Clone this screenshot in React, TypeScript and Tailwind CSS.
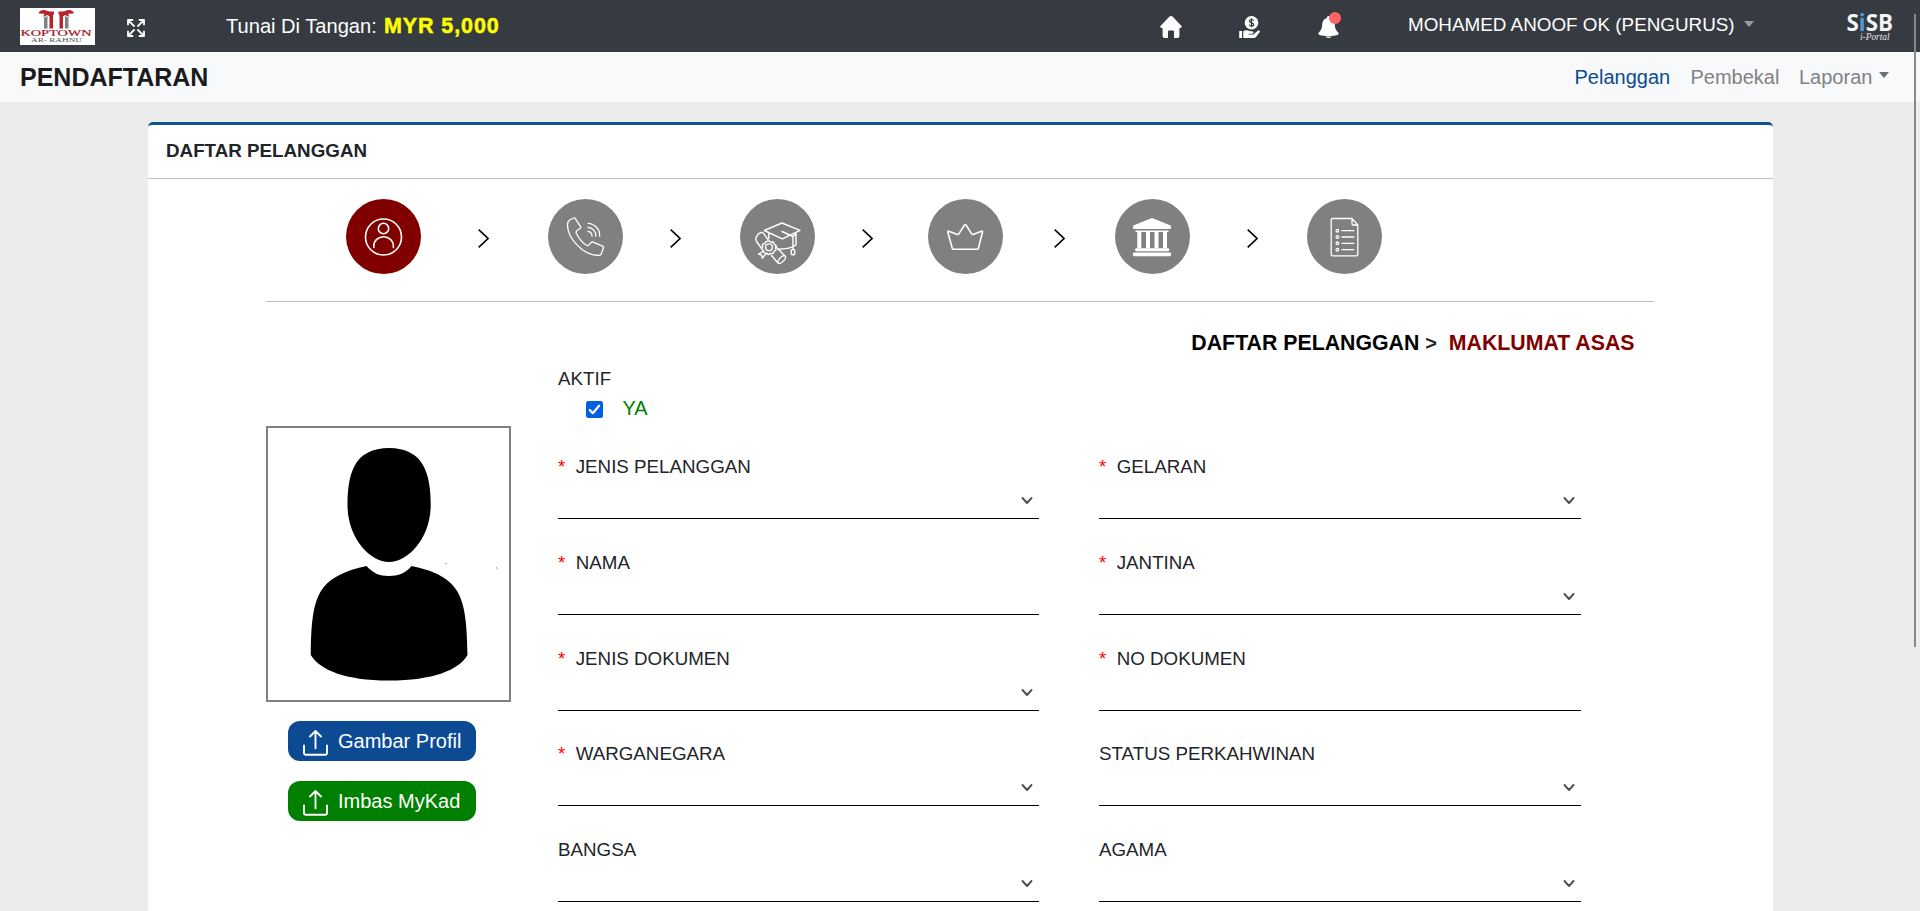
import React from "react";

function KoptownLogo() {
  return (
    <svg width="75" height="37" viewBox="0 0 75 37" className="block bg-white">
      <g fill="#808285">
        <path d="M24 9.500l3.500-1.500v12.500H24zM45 8l3.500 1.500V20.500H45z" />
      </g>
      <g fill="#b5232b">
        <path d="M18.500 5.500C19 3.500 21 2 23.500 2c2.500 0 4 1.500 6.500 1.500h4V6c-1 .8-1 1.500-1 3v11.500h-3.500V8.500L27.500 7 23 9l1.500-3.200z" />
        <path d="M54 5.500C53.500 3.500 51.500 2 49 2c-2.500 0-4 1.500-6.500 1.500h-4V6c1 .8 1 1.500 1 3v11.500H43V8.500L45 7l4.500 2L48 5.800z" />
      </g>
      <text x="0.500" y="28" textLength="71" lengthAdjust="spacingAndGlyphs" fontSize="8.500" fill="#a3161f" stroke="#a3161f" strokeWidth=".2" fontFamily="Liberation Serif, serif">KOPTOWN</text>
      <text x="11" y="33.500" textLength="51" lengthAdjust="spacingAndGlyphs" fontSize="5.500" fill="#555" fontFamily="Liberation Serif, serif">AR- RAHNU</text>
    </svg>
  );
}

function ExpandIcon() {
  return (
    <svg width="18" height="18" viewBox="0 0 18 18" fill="none" stroke="#fff" strokeWidth="1.800" strokeLinecap="round" strokeLinejoin="round" className="block">
      <path d="M1 5.500V1h4.500M1.300 1.300l5.700 5.700M12.500 1H17v4.500M16.700 1.300L11 7M1 12.500V17h4.500M1.300 16.700L7 11M12.500 17H17v-4.500M16.700 16.700L11 11" />
    </svg>
  );
}

function HomeIcon() {
  return (
    <svg width="22" height="22" viewBox="0 0 22 22" fill="#fff" className="block">
      <path d="M11 0c.6 0 1.100.2 1.500.6l8.800 9.200c.8.9.3 2.200-.9 2.200h-1v8c0 1.200-.8 2-2 2H14v-6.500c0-.5-.4-.9-.9-.9H8.900c-.5 0-.9.4-.9.900V22H4.600c-1.200 0-2-.8-2-2v-8h-1c-1.200 0-1.700-1.300-.9-2.200L9.500.6c.4-.4.9-.6 1.500-.6z" />
    </svg>
  );
}

function CashHandIcon() {
  return (
    <svg width="22" height="22" viewBox="0 0 22 22" fill="#fff" className="block">
      <circle cx="12.500" cy="6.800" r="6.800" />
      <path d="M14.600 5c-.2-1-1-1.500-2.100-1.500-1.200 0-2.100.6-2.100 1.600 0 2.300 4.300 1.100 4.300 3.400 0 1-.9 1.600-2.200 1.600-1.200 0-2.100-.6-2.200-1.600M12.500 2.300v9" fill="none" stroke="#343a40" strokeWidth="1.200" />
      <path d="M.2 15h2.900v7H.2zM4.300 15.200c1.800-1.200 3.900-1.300 5.700-.4.8.4 1.600.5 2.600.5 1.300 0 1.900.6 1.900 1.300s-.5 1.200-1.400 1.200H9.500v.8h4.300c1 0 1.700-.6 1.900-1.400l3.200-2.500c1-.8 2.500.1 1.900 1.200l-3.800 5c-.6.700-1.300 1.100-2.300 1.100H4.300z" />
    </svg>
  );
}

function BellIcon() {
  return (
    <svg width="21" height="22" viewBox="0 0 21 22" fill="#fff" className="block">
      <path d="M10.500 0c-.9 0-1.500.7-1.500 1.500v.4C6 2.600 4.400 5 4.200 8.500 4 12.500 3.200 14 1 16.200c-1 1-.6 2.300.4 2.700 5 1.400 13 1.400 18.200 0 1-.4 1.400-1.700.4-2.700-2.200-2.200-3-3.700-3.200-7.700C16.600 5 15 2.600 12 1.900v-.4C12 .7 11.400 0 10.500 0zM7.500 20.600h6c-.4 1-1.400 1.400-3 1.400s-2.600-.4-3-1.400z" />
    </svg>
  );
}

function Caret({ className }: { className: string }) {
  return (
    <svg width="10" height="6" viewBox="0 0 10 6" className={className}>
      <path d="M0 0h10L5 6z" fill="currentColor" />
    </svg>
  );
}

function SisbLogo() {
  return (
    <svg width="50" height="49" viewBox="0 -11 50 49" className="block">
      <text x="0.500" y="20" textLength="46.500" lengthAdjust="spacingAndGlyphs" fontFamily="Open Sans, sans-serif" fontWeight="700" fontSize="23" fill="#f4f4f4">
        S<tspan fill="#4a9be0">i</tspan>SB
      </text>
      <text x="14" y="28.500" textLength="29.500" lengthAdjust="spacingAndGlyphs" fontFamily="Liberation Serif, serif" fontStyle="italic" fontSize="9.500" fill="#e6e6e6">i-Portal</text>
    </svg>
  );
}

function TopBar() {
  return (
    <header className="flex h-[52px] items-start bg-[#363a41] text-white">
      <div className="ml-5 mt-2 w-[75px]"><KoptownLogo /></div>
      <div className="ml-8 mt-[19px]"><ExpandIcon /></div>
      <div className="ml-[81px] mt-[11px] flex items-start text-[20.100px] leading-[30px]">
        <span className="w-[158px] whitespace-nowrap">Tunai Di Tangan:</span>
        <span className="whitespace-nowrap text-[21.500px] font-bold tracking-[0.900px] text-[#ffff00] [-webkit-text-stroke:0.5px_#ffff00]">MYR 5,000</span>
      </div>
      <div className="ml-auto mt-4 flex">
        <HomeIcon />
        <div className="ml-[57px]"><CashHandIcon /></div>
        <div className="relative ml-[57px]">
          <BellIcon />
          <span className="absolute -top-1 left-[11px] h-3 w-3 rounded-full bg-[#ff6464]" />
        </div>
      </div>
      <div className="ml-[69px] mr-6 flex w-[488px] items-start">
        <span className="mt-[10.500px] whitespace-nowrap text-[18.850px] leading-[28px]">MOHAMED ANOOF OK (PENGURUS)</span>
        <Caret className="ml-[9px] mt-[21px] text-[#9a9da0]" />
        <div className="ml-auto"><SisbLogo /></div>
      </div>
    </header>
  );
}

function SubBar() {
  return (
    <div className="flex h-[50px] items-start bg-[#f8f9fb] pl-5 pt-[9px]">
      <h1 className="text-[25px] font-bold leading-[33px] text-[#1b1b1d]">PENDAFTARAN</h1>
      <nav className="ml-auto flex items-start pr-[31px] pt-px text-[20px] leading-[30px] text-[#808285]">
        <a className="w-[116px] text-[#0c4a8c]">Pelanggan</a>
        <a className="w-[108.500px]">Pembekal</a>
        <a className="w-[80px]">Laporan</a>
        <Caret className="mt-[10px] text-[#6c6e70]" />
      </nav>
    </div>
  );
}

const UserGlyph = (
  <g strokeWidth="1.600">
    <circle cx="37.500" cy="38" r="18" />
    <circle cx="37.500" cy="29.500" r="5.200" />
    <path d="M27.800 48.500V47a9.800 9.300 0 0 1 19.600 0v1.500" />
  </g>
);

const PhoneGlyph = (
  <g strokeWidth="1.300">
    <path d="M22.500 20.500l3.200-1.500c.7-.3 1.200 0 1.600.6l5.200 8c.4.700.3 1.300-.2 1.700l-3.500 2.500c-.8.700-.9 1.600-.5 2.500 2.500 5 6 9.500 10.200 12 1 .600 1.700.500 2.300-.200l2.400-2.600c.5-.5 1.200-.6 1.900-.3l9.400 4c.9.400 1.200 1 .9 1.800l-2 5.500c-.4 1.300-1.300 2-2.700 2C34.500 56.500 19.200 38.500 19.500 25.500c0-2.500.8-4 3-5z" />
    <path d="M40 32.300a4.700 4.700 0 0 1 4 4.700M40 28.300a8.500 8.500 0 0 1 7.900 8.700M40 24.300a12.300 12.300 0 0 1 11.700 12.700" />
  </g>
);

const EducationGlyph = (
  <g strokeWidth="1.400">
    <path d="M24.300 31.500L42 24l18 7.300-17.700 8.500zM42 32.500l11 5v12M28.800 34v5.500M38.500 50.200c6.500 0 12.500-.7 17.500-4.200V34M53 37l3-1.500" />
    <rect x="51.200" y="50.500" width="3.600" height="5.300" rx="1.500" />
    <path d="M16.500 42.500c-1.800-2.800.7-8 4.500-9 1.200-.3 2 .2 2.700 1.100l4.300 6M16.500 42.500l4.700 6.500M31.500 56.500l6.500 7.500M35.500 47.500l9.800 9.700M38 64c1.500 1.200 4-.2 6-2.600 1.800-2.200 2-3.800 1-4.600-1.600-.6-3.700.6-5.300 2.600-1.500 2-2.300 3.800-1.700 4.600z" />
    <circle cx="29" cy="48.300" r="3.400" />
    <path d="M29 41.800l2 1.400 2.400-.2.800 2.300 2 1.300-.7 2.300.5 2.300-2.100 1.300-1 2.100-2.400-.2-2.100 1.200-1.900-1.500-2.400-.2-.6-2.300-1.800-1.600.9-2.200-.2-2.400 2.300-.9 1.300-1.900z" />
    <path d="M22.800 52.500l-4.300 2.600 3 .9.800 3.200 4-4.700" />
  </g>
);

const CrownGlyph = (
  <path strokeWidth="1.600" d="M20.800 32.200c-.6-.3-1.200.1-1 .8l4.500 16.500c.1.500.5.700 1 .7h24c.5 0 .8-.2 1-.7L54.500 33c.2-.7-.4-1.100-1-.8l-8.500 3.300c-.5.200-.9 0-1.200-.4L38 26c-.5-.7-1-.7-1.500 0l-5.800 9.100c-.3.400-.7.600-1.200.4z" />
);

const BankGlyph = (
  <g fill="#fff" stroke="none">
    <path d="M37 19l18 7.200c.7.300 1 .8 1 1.500V29c0 .7-.4 1-1 1H19.200c-.7 0-1.200-.3-1.200-1v-1.300c0-.7.300-1.200 1-1.500zM20.500 31.500h33V33h-33zM22.300 32.500h4v17h-4zM31 32.500h4v17h-4zM39.500 32.500h4v17h-4zM48 32.500h4v17h-4z" />
    <rect x="20.200" y="49.200" width="34" height="3" rx="1" />
    <rect x="18" y="53.600" width="38" height="3.600" rx="1" />
  </g>
);

const ListGlyph = (
  <g strokeWidth="1.300">
    <path d="M25.200 19.500H45l5.800 6.500v29.800c0 .6-.3 1-1 1H25.200c-.6 0-1-.4-1-1V20.500c0-.6.400-1 1-1zM45 19.500v5.500c0 .6.400 1 1 1h4.800M35 31.700h11.800M35 38h11.800M35 44.300h11.800M35 50.700h11.800" />
    <circle cx="30.400" cy="31.700" r="1.300" />
    <circle cx="30.400" cy="38" r="1.300" />
    <circle cx="30.400" cy="44.300" r="1.300" />
    <circle cx="30.400" cy="50.700" r="1.300" />
  </g>
);

const steps = [
  { id: "asas", glyph: UserGlyph, circle: "bg-[#800000]", arrow: "" },
  { id: "hubungi", glyph: PhoneGlyph, circle: "bg-[#808080] ml-[59px]", arrow: "ml-[57px]" },
  { id: "pendidikan", glyph: EducationGlyph, circle: "bg-[#808080] ml-[59px]", arrow: "ml-[47px]" },
  { id: "ahli", glyph: CrownGlyph, circle: "bg-[#808080] ml-[55px]", arrow: "ml-[47px]" },
  { id: "bank", glyph: BankGlyph, circle: "bg-[#808080] ml-[50px]", arrow: "ml-[51px]" },
  { id: "senarai", glyph: ListGlyph, circle: "bg-[#808080] ml-[49px]", arrow: "ml-[57px]" },
];

function Stepper() {
  return (
    <div className="flex items-center border-b border-[#bfbfbf] pb-[27px] pl-20 pt-5">
      {steps.map((s, i) => (
        <React.Fragment key={s.id}>
          {i > 0 && (
            <svg width="11" height="19" viewBox="0 0 11 19" fill="none" stroke="#000" strokeWidth="1.600" className={`mt-[3px] shrink-0 ${s.arrow}`}>
              <path d="M.7.700L10 9.500.7 18.300" />
            </svg>
          )}
          <div className={`h-[75px] w-[75px] shrink-0 rounded-full ${s.circle}`}>
            <svg width="75" height="75" viewBox="0 0 75 75" fill="none" stroke="#fff" strokeLinejoin="round" strokeLinecap="round" className="block">
              {s.glyph}
            </svg>
          </div>
        </React.Fragment>
      ))}
    </div>
  );
}

function UploadButton({ label, className }: { label: string; className: string }) {
  return (
    <button className={`flex h-10 w-[188px] items-start rounded-xl pl-[15px] text-[20px] leading-[40px] text-white ${className}`}>
      <svg width="25" height="26" viewBox="0 0 25 26" fill="none" stroke="#fff" strokeWidth="1.900" strokeLinecap="round" strokeLinejoin="round" className="mt-[9px]">
        <path d="M1 15.500v7.800c0 .9.500 1.500 1.500 1.500h20c1 0 1.500-.6 1.500-1.500v-7.800M12.500 18.300V1.200M7 6.500l5.500-5.500L18 6.500" />
      </svg>
      <span className="ml-[10px] whitespace-nowrap">{label}</span>
    </button>
  );
}

function Profile() {
  return (
    <aside className="w-[245px] shrink-0 pt-[124px]">
      <div className="h-[276px] w-[245px] border-2 border-[#808080]">
        <svg width="241" height="272" viewBox="2 2 241 272" className="block">
          <path d="M123 22C139 22 152 28 158 41C163 51 164.700 64 164.700 79C164.700 112 142 136 123 136C104 136 81.500 112 81.500 79C81.500 64 83 51 88 41C94 28 107 22 123 22Z" />
          <path d="M100.500 140C107 147 113 150 123 150C132 150 140 147 145.500 140C170 145 184 153 191 165C199 178 201 197 201.500 229C193 244 167 254.500 123 254.500C79 254.500 54 244 44.800 229C45 197 47 178 55 165C62 153 77 145 100.500 140Z" />
          <circle cx="180" cy="137.500" r=".7" fill="#999" />
          <path d="M230 141l2 2.500" stroke="#999" strokeWidth=".9" />
        </svg>
      </div>
      <div className="ml-[22px] mt-[19px] flex flex-col gap-5">
        <UploadButton label="Gambar Profil" className="bg-[#0c4a94]" />
        <UploadButton label="Imbas MyKad" className="bg-[#008000]" />
      </div>
    </aside>
  );
}

const fields = [
  { label: "JENIS PELANGGAN", required: true, select: true },
  { label: "GELARAN", required: true, select: true },
  { label: "NAMA", required: true, select: false },
  { label: "JANTINA", required: true, select: true },
  { label: "JENIS DOKUMEN", required: true, select: true },
  { label: "NO DOKUMEN", required: true, select: false },
  { label: "WARGANEGARA", required: true, select: true },
  { label: "STATUS PERKAHWINAN", required: false, select: true },
  { label: "BANGSA", required: false, select: true },
  { label: "AGAMA", required: false, select: true },
];

function Field({ label, required, select }: { label: string; required: boolean; select: boolean }) {
  return (
    <div>
      <label className="block whitespace-pre text-[18.750px] leading-[28px] text-[#212529]">
        {required && <span className="text-[#ff0000]">{"*  "}</span>}
        {label}
      </label>
      <div className="flex h-[38px] justify-end border-b border-black pr-[6px] pt-[15px]">
        {select && (
          <svg width="12" height="9" viewBox="0 0 12 9" fill="none" stroke="#495057" strokeWidth="1.900" strokeLinecap="round" strokeLinejoin="round">
            <path d="M1.500 2L6 7l4.500-5" />
          </svg>
        )}
      </div>
    </div>
  );
}

function Form() {
  return (
    <div className="ml-[47px] w-[1023px] shrink-0">
      <div className="pt-[63px] text-[18.750px] leading-[28px] text-[#212529]">AKTIF</div>
      <div className="flex h-[60px] items-start pl-7">
        <span className="mt-2 flex h-[17px] w-[17px] items-center justify-center rounded-[2.500px] bg-[#0060df]">
          <svg width="17" height="17" viewBox="0 0 17 17" fill="none" stroke="#fff" strokeWidth="2.200" strokeLinecap="round" strokeLinejoin="round">
            <path d="M3.800 9l3 3.200 6.300-7.500" />
          </svg>
        </span>
        <span className="ml-[19.500px] text-[20px] leading-[31px] text-[#008000]">YA</span>
      </div>
      <div className="grid grid-cols-[481px_482px] grid-rows-[96px_96px_95px_96px_96px] gap-x-[60px]">
        {fields.map((f) => (
          <Field key={f.label} {...f} />
        ))}
      </div>
    </div>
  );
}

export default function App() {
  return (
    <div className="relative h-[911px] w-[1920px] overflow-hidden bg-[#ececec] font-['Liberation_Sans',Arial,sans-serif]">
      <TopBar />
      <SubBar />
      <main className="ml-[148px] mt-5 h-[900px] w-[1625px] rounded-t-[5px] border-t-[3px] border-[#0f5192] bg-white">
        <div className="h-[54px] border-b border-[#bfbfbf] pl-[18px] pt-3 text-[18.800px] font-bold leading-[28px] text-[#212529]">
          DAFTAR PELANGGAN
        </div>
        <div className="ml-[118px] w-[1388px]">
          <Stepper />
          <div className="flex">
            <Profile />
            <div className="relative">
              <Form />
              <div className="absolute right-[-53.500px] top-[24.500px] whitespace-pre text-[21.300px] font-bold leading-[32px] text-black">
                DAFTAR PELANGGAN <span className="text-[20px] text-[#212529]">&gt;</span>{"  "}<span className="text-[#800000]">MAKLUMAT ASAS</span>
              </div>
            </div>
          </div>
        </div>
      </main>
      <div className="absolute left-[1914px] top-[14px] h-[633px] w-[2px] bg-[#888]" />
    </div>
  );
}
